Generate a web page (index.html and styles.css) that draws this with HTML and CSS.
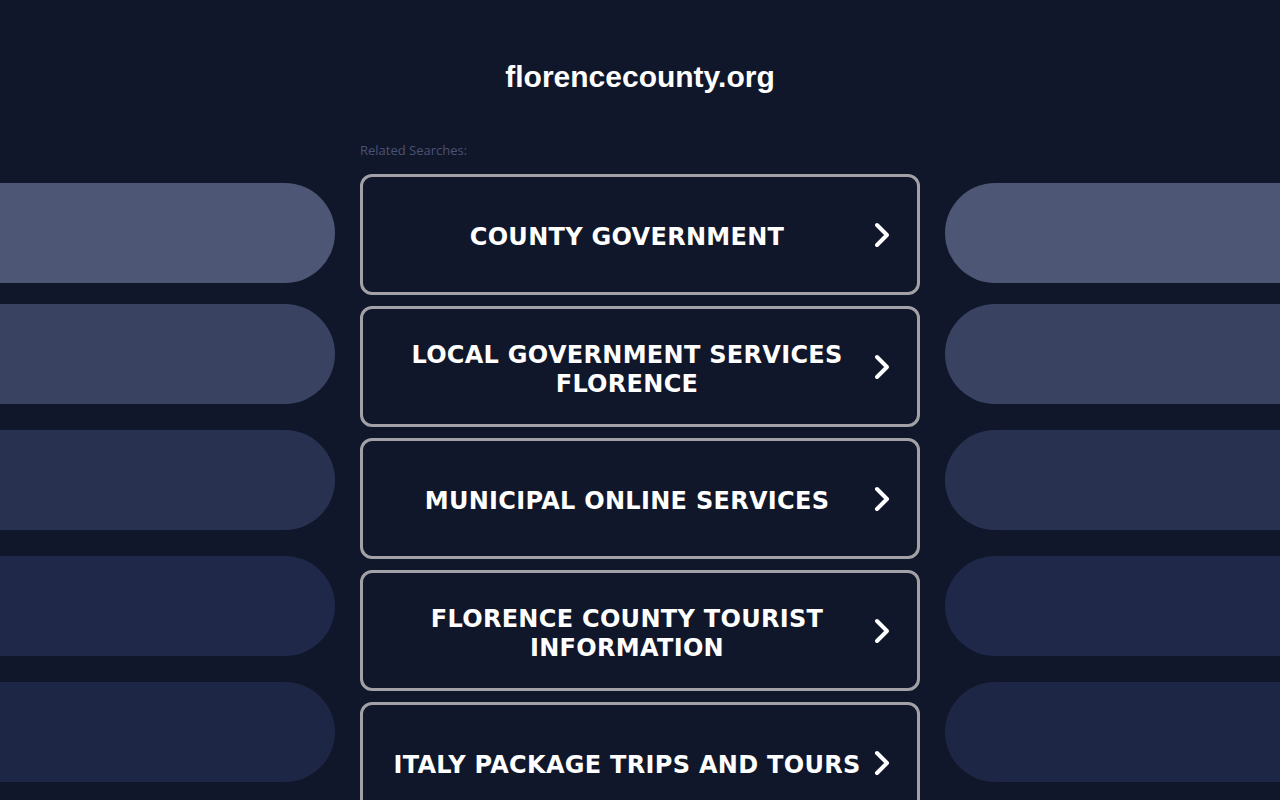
FILE: index.html
```html
<!DOCTYPE html>
<html lang="en">
<head>
<meta charset="utf-8">
<title>florencecounty.org</title>
<link rel="stylesheet" href="styles.css">
</head>
<body>
<header class="site-header">
  <h1 class="domain">florencecounty.org</h1>
</header>
<main class="layout">
  <div class="side side-left">
    <div class="pill pill-1 pill-first"></div>
    <div class="pill pill-2"></div>
    <div class="pill pill-3"></div>
    <div class="pill pill-4"></div>
    <div class="pill pill-5"></div>
  </div>
  <section class="center">
    <p class="related">Related Searches:</p>
    <div class="links">
      <a class="link-box" href="#"><span class="link-text">COUNTY GOVERNMENT</span><svg class="chev" viewBox="0 0 20 28" width="20" height="28"><path d="M5 4 L15 14 L5 24" fill="none" stroke="#fff" stroke-width="4" stroke-linecap="round" stroke-linejoin="round"/></svg></a>
      <a class="link-box" href="#"><span class="link-text">LOCAL GOVERNMENT SERVICES FLORENCE</span><svg class="chev" viewBox="0 0 20 28" width="20" height="28"><path d="M5 4 L15 14 L5 24" fill="none" stroke="#fff" stroke-width="4" stroke-linecap="round" stroke-linejoin="round"/></svg></a>
      <a class="link-box" href="#"><span class="link-text">MUNICIPAL ONLINE SERVICES</span><svg class="chev" viewBox="0 0 20 28" width="20" height="28"><path d="M5 4 L15 14 L5 24" fill="none" stroke="#fff" stroke-width="4" stroke-linecap="round" stroke-linejoin="round"/></svg></a>
      <a class="link-box" href="#"><span class="link-text">FLORENCE COUNTY TOURIST INFORMATION</span><svg class="chev" viewBox="0 0 20 28" width="20" height="28"><path d="M5 4 L15 14 L5 24" fill="none" stroke="#fff" stroke-width="4" stroke-linecap="round" stroke-linejoin="round"/></svg></a>
      <a class="link-box" href="#"><span class="link-text">ITALY PACKAGE TRIPS AND TOURS</span><svg class="chev" viewBox="0 0 20 28" width="20" height="28"><path d="M5 4 L15 14 L5 24" fill="none" stroke="#fff" stroke-width="4" stroke-linecap="round" stroke-linejoin="round"/></svg></a>
    </div>
  </section>
  <div class="side side-right">
    <div class="pill pill-1 pill-first"></div>
    <div class="pill pill-2"></div>
    <div class="pill pill-3"></div>
    <div class="pill pill-4"></div>
    <div class="pill pill-5"></div>
  </div>
</main>
</body>
</html>
```
FILE: styles.css
```css
* { box-sizing: border-box; }
html, body {
  margin: 0;
  padding: 0;
  background: #11172a;
  height: 800px;
  overflow: hidden;
}
body {
  font-family: "Liberation Sans", Arial, sans-serif;
  color: #fff;
}
.site-header {
  height: 140px;
  display: flex;
  justify-content: center;
  padding-top: 57px;
}
.domain {
  margin: 0;
  font-size: 30px;
  line-height: 40px;
  font-weight: bold;
  color: #fff;
}
.layout {
  display: grid;
  grid-template-columns: 335px 560px 335px;
  column-gap: 25px;
}
.side {
  display: flex;
  flex-direction: column;
  gap: 26px;
  padding-top: 43px;
}
.pill {
  height: 100px;
}
.pill-first { margin-bottom: -5px; }
.side-left .pill { border-radius: 0 50px 50px 0; }
.side-right .pill { border-radius: 50px 0 0 50px; }
.pill-1 { background: #4d5674; }
.pill-2 { background: #3a4261; }
.pill-3 { background: #283150; }
.pill-4 { background: #1f2849; }
.pill-5 { background: #1e2646; }
.center {
  display: flex;
  flex-direction: column;
}
.related {
  margin: 0;
  font-family: "Open Sans", "Liberation Sans", sans-serif;
  font-size: 13px;
  line-height: 20px;
  color: #4a5275;
  height: 34px;
}
.links {
  display: flex;
  flex-direction: column;
  gap: 11px;
}
.link-box {
  display: flex;
  align-items: center;
  height: 121px;
  border: 3px solid #a2a2a6;
  border-radius: 12px;
  padding: 6px 25px 0 23px;
  text-decoration: none;
  color: #fff;
  background: #11172a;
}
.link-text {
  flex: 1;
  text-align: center;
  font-family: "DejaVu Sans", Verdana, sans-serif;
  font-weight: bold;
  font-size: 24px;
  line-height: 29px;
  letter-spacing: 0.3px;
}
.chev {
  flex: none;
  margin-left: 4px;
  margin-top: -6px;
}
```
